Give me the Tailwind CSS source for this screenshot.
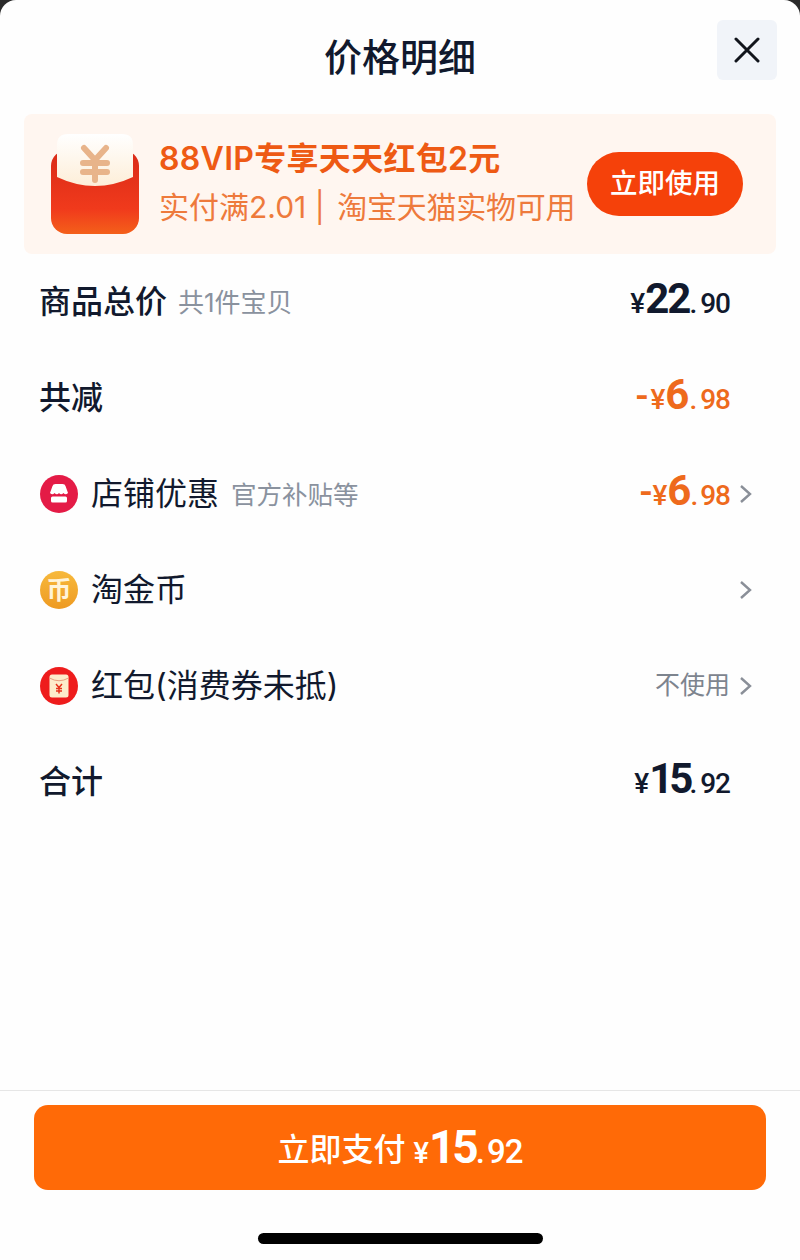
<!DOCTYPE html>
<html lang="zh">
<head>
  <meta charset="UTF-8">
  <title>价格明细</title>
  <script src="https://cdn.jsdelivr.net/npm/@tailwindcss/browser@4"></script>
</head>
<body class="bg-[#2a2a2a] font-['Inter','Noto_Sans_CJK_SC',sans-serif] text-[#11192d]">
  <div class="w-[800px] h-[1260px] bg-[#fefefe] rounded-t-[16px] flex flex-col overflow-hidden">

    <!-- Header -->
    <div class="h-[114px] shrink-0 flex items-start justify-between px-[23px] pt-[20px]">
      <div class="w-[60px]"></div>
      <h1 class="text-[38px] leading-[74px] font-medium">价格明细</h1>
      <button class="w-[60px] h-[60px] bg-[#f1f4f9] rounded-md flex items-center justify-center">
        <svg width="26" height="26" viewBox="0 0 26 26" fill="none" stroke="#11141c" stroke-width="3" stroke-linecap="round"><path d="M2 2 L24 24 M24 2 L2 24"/></svg>
      </button>
    </div>

    <!-- Banner -->
    <div class="mx-[24px] h-[140px] shrink-0 bg-[#fff6f0] rounded-lg flex items-center pl-[27px]">
      <svg class="shrink-0" width="88" height="100" viewBox="0 0 88 100">
        <defs>
          <linearGradient id="packet" x1="0" y1="0" x2="0" y2="1">
            <stop offset="0" stop-color="#d92a18"/><stop offset="0.7" stop-color="#f03a1c"/><stop offset="1" stop-color="#f4601a"/>
          </linearGradient>
          <linearGradient id="flap" x1="0" y1="0" x2="0" y2="1">
            <stop offset="0" stop-color="#ffffff"/><stop offset="1" stop-color="#fdeed8"/>
          </linearGradient>
          <linearGradient id="coin" x1="0" y1="0" x2="0" y2="1">
            <stop offset="0" stop-color="#f7b93c"/><stop offset="1" stop-color="#ee9a22"/>
          </linearGradient>
        </defs>
        <rect x="0" y="16" width="88" height="84" rx="16" fill="url(#packet)"/>
        <path d="M6 11 Q6 0 17 0 H71 Q82 0 82 11 V43 Q44 61 6 43 Z" fill="url(#flap)"/>
        <g fill="none" stroke="#e8b48a" stroke-width="6" stroke-linecap="round">
          <path d="M33 14 L44 26 L55 14 M32 29 H56 M32 38 H56 M44 26 V46"/>
        </g>
      </svg>
      <div class="ml-[20px] w-[428px]">
        <div class="text-[#ee5a14] text-[32px] tracking-[0.3px] leading-[40px] font-semibold whitespace-nowrap">88VIP专享天天红包2元</div>
        <div class="text-[#ee7a3c] text-[30px] leading-[44px] whitespace-nowrap mt-[6px]">实付满2.01 | <span class="ml-[4px] tracking-[-0.25px]">淘宝天猫实物可用</span></div>
      </div>
      <button class="w-[156px] h-[64px] rounded-full bg-[#f5410a] text-white text-[27.5px] font-medium">立即使用</button>
    </div>

    <!-- Rows -->
    <div class="pl-[39px] pr-[47px]">
      <div class="h-[96px] flex items-center justify-between">
        <div class="flex items-center">
          <span class="text-[32px] font-medium">商品总价</span>
          <span class="ml-[11px] text-[26px] text-[#8a929e]">共1件宝贝</span>
        </div>
        <div class="mr-[23px] mb-[6px] flex items-baseline leading-none font-['Roboto'] font-medium">
          <span class="text-[28px]">¥</span><span class="text-[42px] font-bold tracking-[-2px]">22</span><span class="text-[28px] mr-[3px]">.</span><span class="text-[28px] tracking-[-1px]">90</span>
        </div>
      </div>

      <div class="h-[96px] flex items-center justify-between">
        <span class="text-[32px] font-medium">共减</span>
        <div class="mr-[23px] mb-[6px] flex items-baseline leading-none font-['Roboto'] font-medium text-[#ee6a1c]">
          <span class="text-[38px] mr-[2px]">-</span><span class="text-[28px]">¥</span><span class="text-[42px] font-bold">6</span><span class="text-[28px] mr-[3px]">.</span><span class="text-[28px] tracking-[-1px]">98</span>
        </div>
      </div>

      <div class="h-[96px] flex items-center justify-between">
        <div class="flex items-center">
          <svg class="ml-[1px]" width="38" height="38" viewBox="0 0 38 38">
            <circle cx="19" cy="19" r="19" fill="#e41b46"/>
            <path d="M10 18 L12.500 11 Q13 9 15.500 9 H22.500 Q25 9 25.500 11 L28 18 Q25.500 20.500 23.500 18 Q21 20.500 19 18 Q17 20.500 14.500 18 Q12.500 20.500 10 18 Z" fill="#fff"/>
            <rect x="11" y="21.500" width="16" height="6" rx="1.500" fill="#fff"/>
          </svg>
          <span class="ml-[13px] text-[32px]">店铺优惠</span>
          <span class="ml-[12px] mt-[2px] text-[25.5px] text-[#8a929e]">官方补贴等</span>
        </div>
        <div class="flex items-center">
          <div class="mb-[6px] flex items-baseline leading-none font-['Roboto'] font-medium text-[#ee6a1c]">
            <span class="text-[38px]">-</span><span class="text-[28px]">¥</span><span class="text-[42px] font-bold tracking-[-1px]">6</span><span class="text-[28px] mr-[2px]">.</span><span class="text-[28px] tracking-[-1px]">98</span>
          </div>
          <svg class="ml-[9px]" width="14" height="20" viewBox="0 0 14 20" fill="none" stroke="#8a8f98" stroke-width="2.400"><path d="M2 2 L11 10 L2 18"/></svg>
        </div>
      </div>

      <div class="h-[96px] flex items-center justify-between">
        <div class="flex items-center">
          <svg class="ml-[1px]" width="38" height="38" viewBox="0 0 38 38">
            <circle cx="19" cy="19" r="19" fill="url(#coin)"/>
            <text x="19" y="28" text-anchor="middle" font-size="25" font-weight="700" fill="#fff3d8" font-family="Noto Sans CJK SC">币</text>
          </svg>
          <span class="ml-[13px] text-[32px]">淘金币</span>
        </div>
        <svg width="14" height="20" viewBox="0 0 14 20" fill="none" stroke="#8a8f98" stroke-width="2.400"><path d="M2 2 L11 10 L2 18"/></svg>
      </div>

      <div class="h-[96px] flex items-center justify-between">
        <div class="flex items-center">
          <svg class="ml-[1px]" width="38" height="38" viewBox="0 0 38 38">
            <circle cx="19" cy="19" r="19" fill="#ee1c1c"/>
            <rect x="9.500" y="7.500" width="19" height="23" rx="2.500" fill="#fdeccb"/>
            <path d="M9.500 11 Q19 16.500 28.500 11" fill="none" stroke="#e8a080" stroke-width="1"/>
            <path d="M16 17 L19 20.500 L22 17 M16 21.500 H22 M16 24 H22 M19 20.500 V26.500" fill="none" stroke="#e8321c" stroke-width="1.500"/>
          </svg>
          <span class="ml-[13px] text-[32px]">红包(消费券未抵)</span>
        </div>
        <div class="flex items-center">
          <span class="text-[25px] text-[#7d848e]">不使用</span>
          <svg class="ml-[9px]" width="14" height="20" viewBox="0 0 14 20" fill="none" stroke="#8a8f98" stroke-width="2.400"><path d="M2 2 L11 10 L2 18"/></svg>
        </div>
      </div>

      <div class="h-[96px] flex items-center justify-between">
        <span class="text-[32px] font-medium">合计</span>
        <div class="mr-[23px] mb-[6px] flex items-baseline leading-none font-['Roboto'] font-medium">
          <span class="text-[28px]">¥</span><span class="text-[42px] font-bold tracking-[-4px]">15</span><span class="text-[28px] mr-[3px]">.</span><span class="text-[28px] tracking-[-1px]">92</span>
        </div>
      </div>
    </div>

    <div class="flex-1"></div>

    <!-- Footer -->
    <div class="h-[170px] shrink-0 border-t border-[#e6e6e6] pt-[14px] px-[34px] relative">
      <button class="w-[732px] h-[85px] rounded-[14px] bg-[#ff6a07] text-white flex items-center justify-center">
        <span class="mt-[4px] text-[32px] font-medium">立即支付</span>
        <span class="ml-[8px] mb-[2px] flex items-baseline leading-none font-['Roboto'] font-medium">
          <span class="text-[29px]">¥</span><span class="text-[46px] font-bold tracking-[-3px]">15</span><span class="text-[33px] mr-[2px]">.</span><span class="text-[33px] tracking-[-1px]">92</span>
        </span>
      </button>
      <div class="absolute left-[258px] top-[142px] w-[285px] h-[11px] rounded-full bg-black"></div>
    </div>
  </div>
</body>
</html>
